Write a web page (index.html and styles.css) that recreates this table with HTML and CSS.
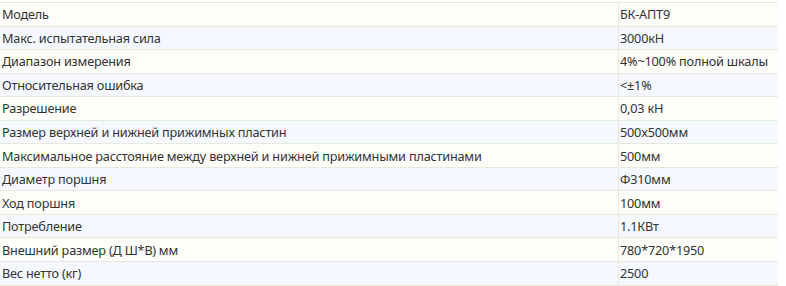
FILE: index.html
```html
<!DOCTYPE html>
<html>
<head>
<meta charset="utf-8">
<link rel="stylesheet" href="styles.css">
</head>
<body>
<table class="spec">
<tbody>
<tr><td class="k">Модель</td><td class="v">БК-АПТ9</td></tr>
<tr><td class="k">Макс. испытательная сила</td><td class="v">3000кН</td></tr>
<tr><td class="k">Диапазон измерения</td><td class="v">4%~100% полной шкалы</td></tr>
<tr><td class="k">Относительная ошибка</td><td class="v">&lt;±1%</td></tr>
<tr><td class="k">Разрешение</td><td class="v">0,03 кН</td></tr>
<tr><td class="k">Размер верхней и нижней прижимных пластин</td><td class="v">500x500мм</td></tr>
<tr><td class="k">Максимальное расстояние между верхней и нижней прижимными пластинами</td><td class="v">500мм</td></tr>
<tr><td class="k">Диаметр поршня</td><td class="v">Ф310мм</td></tr>
<tr><td class="k">Ход поршня</td><td class="v">100мм</td></tr>
<tr><td class="k">Потребление</td><td class="v">1.1КВт</td></tr>
<tr><td class="k">Внешний размер (Д Ш*В) мм</td><td class="v">780*720*1950</td></tr>
<tr><td class="k">Вес нетто (кг)</td><td class="v">2500</td></tr>
</tbody>
</table>
</body>
</html>
```
FILE: styles.css
```css
html, body {
  margin: 0;
  padding: 0;
  background: #ffffff;
}
body {
  padding-top: 2px;
  font-family: "Noto Sans", "Open Sans", sans-serif;
  font-size: 12.7px;
  letter-spacing: -0.2px;
  color: #333333;
}
.spec {
  border-collapse: collapse;
  width: 778px;
  table-layout: fixed;
}
.spec tr {
  height: 23.55px;
}
.spec tr:nth-child(odd) {
  background: #fdfdfa;
}
.spec tr:nth-child(even) {
  background: #f5f9ff;
}
.spec td {
  border-top: 1px solid #ebe7dc;
  border-bottom: 1px solid #ebe7dc;
  padding: 0 0 0 2px;
  white-space: nowrap;
  line-height: 16px;
  vertical-align: middle;
}
.spec td.k {
  width: 616px;
  border-right: 1px solid #ebe7dc;
}
.spec td.v {
  padding-left: 1px;
}
```
